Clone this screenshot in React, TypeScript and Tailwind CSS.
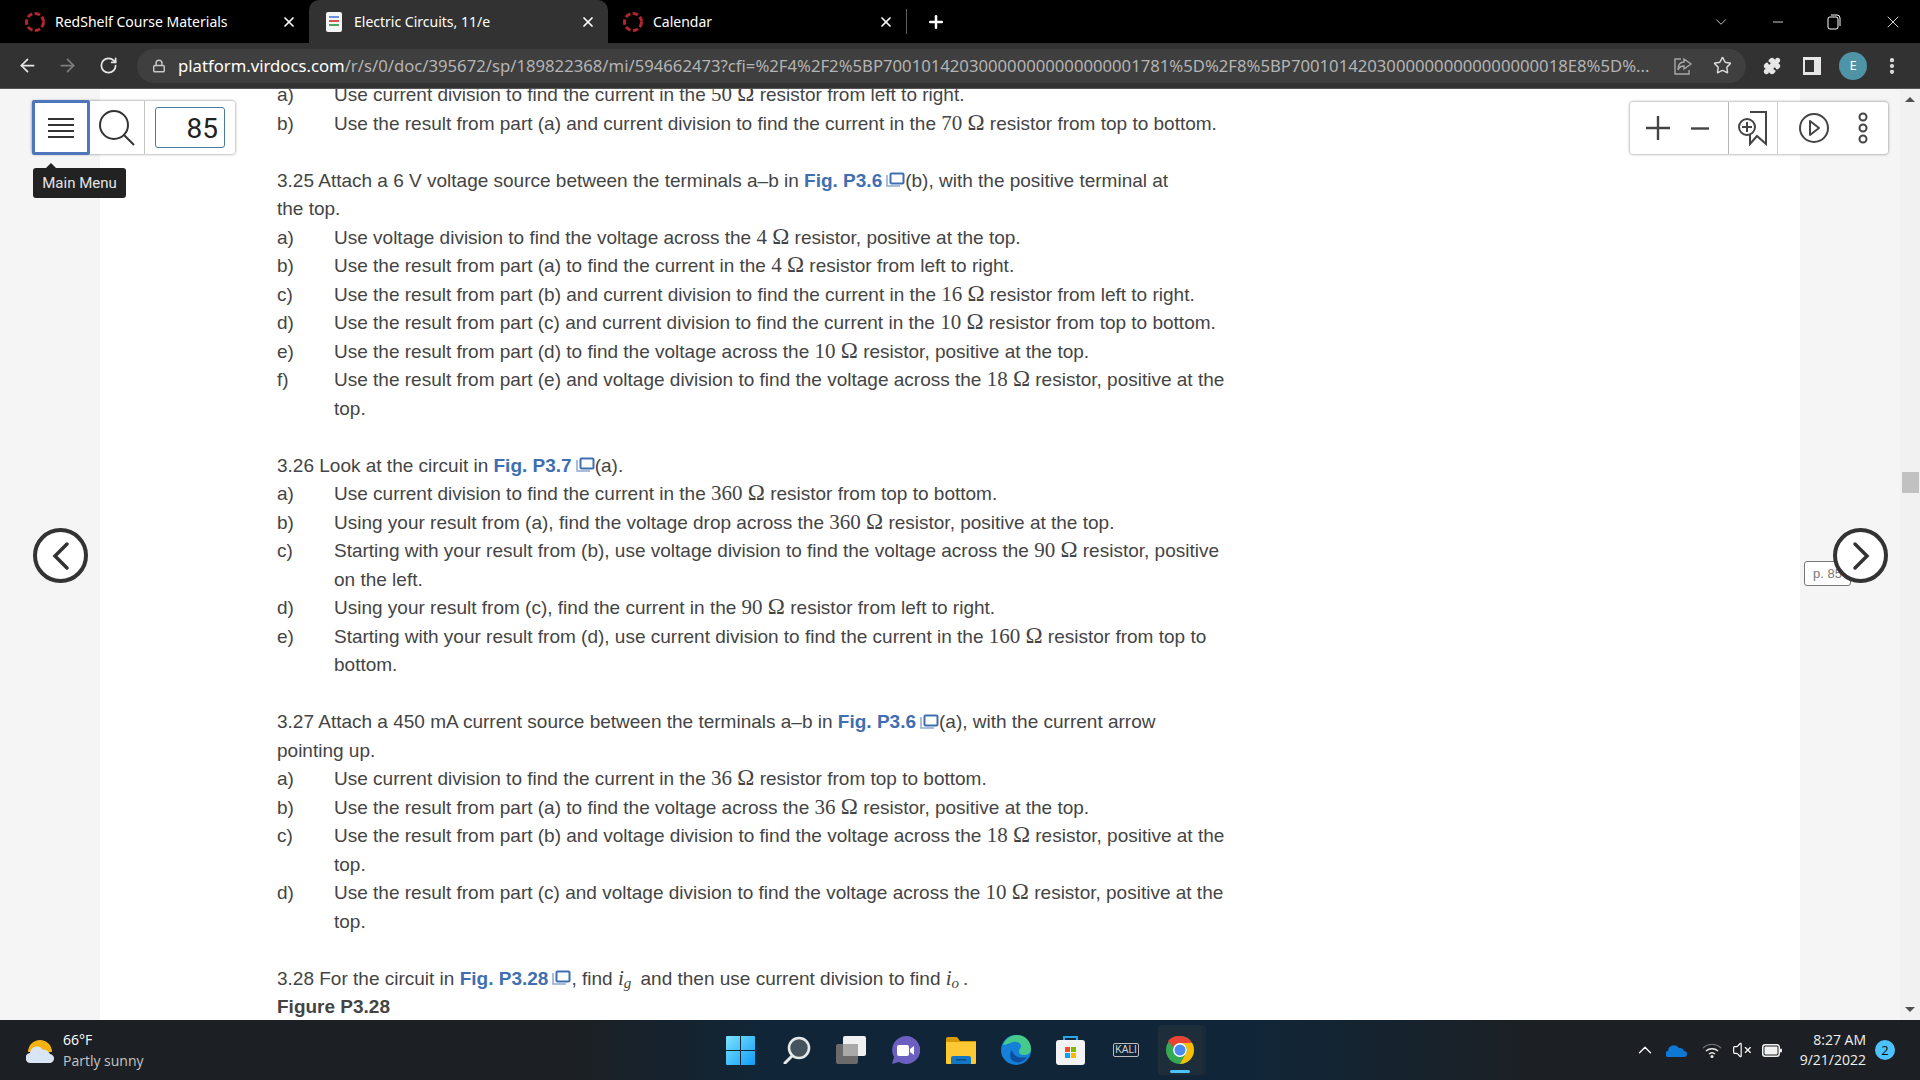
import React from "react";
import { ArrowLeft, ArrowRight, RotateCw, Lock, Star, Puzzle, MoreVertical, X, Plus, ChevronDown, Minus, ChevronUp, VolumeX } from "lucide-react";

const SANS = "font-['Liberation_Sans',Arial,sans-serif]";

// math runs use a serif face, a bit bigger than the body text
const Ohm: React.FC<{ v: string }> = ({ v }) => (
  <span className="font-['Liberation_Serif',serif] text-[21px] leading-none">{v} <span className="text-[23px] leading-none">Ω</span></span>
);

const Fig: React.FC<{ label: string }> = ({ label }) => (
  <span className="inline-flex items-center leading-none text-[#3f6fb0] font-bold">
    {label}
    <svg width="19" height="16" viewBox="0 0 19 16" className="ml-[4px]" fill="none">
      <rect x="4.500" y="1.500" width="13" height="10" rx="1" stroke="#3f6fb0" strokeWidth="2" />
      <path d="M1 3v11h13" stroke="#8fa9d0" strokeWidth="1.500" />
    </svg>
  </span>
);

const Item: React.FC<{ k: string; children: React.ReactNode }> = ({ k, children }) => (
  <div className="flex">
    <span className="w-[57px] shrink-0">{k}</span>
    <span className="w-[895px]">{children}</span>
  </div>
);

const RedShelfIcon: React.FC = () => (
  <svg width="22" height="22" viewBox="0 0 22 22" fill="none">
    <circle cx="11" cy="11" r="8.500" stroke="#b3262e" strokeWidth="3" strokeDasharray="5.500 2.400" />
  </svg>
);

const Tab: React.FC<{ title: string; icon: React.ReactNode; active?: boolean; w: string; pl: string }> = ({ title, icon, active, w, pl }) => (
  <div className={`${w} ${pl} h-[43px] flex items-center pr-[12px] rounded-t-[10px] ${active ? "bg-[#323232]" : ""}`}>
    <span className="w-[22px] flex justify-center shrink-0">{icon}</span>
    <span className="ml-[9px] text-[14px] text-white flex-1 truncate">{title}</span>
    <X size={16} strokeWidth={2.600} className="text-white" />
  </div>
);

const DocIcon: React.FC = () => (
  <svg width="18" height="22" viewBox="0 0 18 22">
    <rect x="1" y="1" width="16" height="20" rx="2" fill="#f4f4f4" />
    <rect x="4" y="5" width="10" height="2" fill="#6b8fd8" />
    <rect x="4" y="9" width="10" height="2" fill="#d0534c" />
    <rect x="4" y="13" width="10" height="2" fill="#4aa564" />
  </svg>
);

const ChromeBar: React.FC = () => (
  <div className="shrink-0">
    <div className="h-[43px] bg-black flex items-center">
      <Tab w="w-[309px]" pl="pl-[24px]" title="RedShelf Course Materials" icon={<RedShelfIcon />} />
      <Tab w="w-[299px]" pl="pl-[14px]" title="Electric Circuits, 11/e" icon={<DocIcon />} active />
      <Tab w="w-[298px]" pl="pl-[14px]" title="Calendar" icon={<RedShelfIcon />} />
      <div className="w-px h-[25px] bg-[#5f5f5f]" />
      <Plus size={20} strokeWidth={3} className="text-white ml-[19px]" />
      <div className="ml-auto flex items-center text-white">
        <ChevronDown size={18} strokeWidth={1} className="mr-[40px]" />
        <Minus size={16} strokeWidth={1.200} className="mr-[41px]" />
        <svg width="14" height="16" viewBox="0 0 14 16" fill="none" stroke="#fff" className="mr-[42px]">
          <rect x="1" y="3" width="10" height="12" rx="2" />
          <path d="M4 1h6a3 3 0 0 1 3 3v8" />
        </svg>
        <X size={20} strokeWidth={1} className="mr-[17px]" />
      </div>
    </div>
    <div className="h-[46px] bg-[#323232] border-b border-[#555] flex items-center">
      <ArrowLeft size={21} strokeWidth={2} className="text-[#e6e6e6] ml-[17px] shrink-0" />
      <ArrowRight size={21} strokeWidth={2} className="text-[#7d7d7d] ml-[19px] shrink-0" />
      <RotateCw size={19} strokeWidth={2.200} className="text-[#e6e6e6] ml-[21px] shrink-0" />
      <div className="ml-[19px] w-[1609px] h-[34px] shrink-0 rounded-full bg-[#3f3f3f] flex items-center pl-[15px] relative">
        <Lock size={14} strokeWidth={2.500} className="text-[#c8c8c8] shrink-0" />
        <span className="ml-[12px] text-[16.700px] whitespace-nowrap text-[#b4b4b4]">
          <span className="text-white">platform.virdocs.com</span>
          /r/s/0/doc/395672/sp/189822368/mi/594662473?cfi=%2F4%2F2%5BP700101420300000000000000001781%5D%2F8%5BP70010142030000000000000000018E8%5D%...
        </span>
        <svg width="20" height="20" viewBox="0 0 20 20" fill="none" stroke="#a8a8a8" strokeWidth="1.400" className="absolute left-[1536px]">
          <path d="M8 3H2v15h14v-4" />
          <path d="M11 3l7 5-7 5v-3c-3 0-5 1-6 4 0-5 2-8 6-8z" />
        </svg>
        <Star size={19} strokeWidth={1.800} className="text-[#dcdcdc] absolute left-[1576px]" />
      </div>
      <Puzzle size={18} fill="#e6e6e6" className="text-[#e6e6e6] ml-[17px] shrink-0" />
      <svg width="18" height="18" viewBox="0 0 18 18" className="ml-[22px] shrink-0">
        <rect x="0" y="0" width="18" height="18" fill="#e6e6e6" />
        <rect x="2" y="3" width="9" height="12" fill="#323232" />
      </svg>
      <div className="ml-[18px] w-[28px] h-[28px] shrink-0 rounded-full bg-[#4f93a6] text-white text-[13px] flex items-center justify-center">E</div>
      <MoreVertical size={20} strokeWidth={3} className="text-[#e6e6e6] ml-[15px] shrink-0" />
    </div>
  </div>
);

const Reader: React.FC = () => (
  <div className={`${SANS} w-[1700px] bg-white text-[#444] text-[19px] leading-[28.500px] pl-[177px] overflow-hidden`}>
    <div className="mt-[-8px]">
      <Item k="a)">Use current division to find the current in the <Ohm v="50" /> resistor from left to right.</Item>
      <Item k="b)">Use the result from part (a) and current division to find the current in the <Ohm v="70" /> resistor from top to bottom.</Item>
    </div>
    <div className="mt-[28.500px] w-[900px]">3.25 Attach a 6 V voltage source between the terminals a–b in <Fig label="Fig. P3.6" />(b), with the positive terminal at the top.</div>
    <Item k="a)">Use voltage division to find the voltage across the <Ohm v="4" /> resistor, positive at the top.</Item>
    <Item k="b)">Use the result from part (a) to find the current in the <Ohm v="4" /> resistor from left to right.</Item>
    <Item k="c)">Use the result from part (b) and current division to find the current in the <Ohm v="16" /> resistor from left to right.</Item>
    <Item k="d)">Use the result from part (c) and current division to find the current in the <Ohm v="10" /> resistor from top to bottom.</Item>
    <Item k="e)">Use the result from part (d) to find the voltage across the <Ohm v="10" /> resistor, positive at the top.</Item>
    <Item k="f)">Use the result from part (e) and voltage division to find the voltage across the <Ohm v="18" /> resistor, positive at the top.</Item>
    <div className="mt-[28.500px]">3.26 Look at the circuit in <Fig label="Fig. P3.7" />(a).</div>
    <Item k="a)">Use current division to find the current in the <Ohm v="360" /> resistor from top to bottom.</Item>
    <Item k="b)">Using your result from (a), find the voltage drop across the <Ohm v="360" /> resistor, positive at the top.</Item>
    <Item k="c)">Starting with your result from (b), use voltage division to find the voltage across the <Ohm v="90" /> resistor, positive on the left.</Item>
    <Item k="d)">Using your result from (c), find the current in the <Ohm v="90" /> resistor from left to right.</Item>
    <Item k="e)">Starting with your result from (d), use current division to find the current in the <Ohm v="160" /> resistor from top to bottom.</Item>
    <div className="mt-[28.500px] w-[900px]">3.27 Attach a 450 mA current source between the terminals a–b in <Fig label="Fig. P3.6" />(a), with the current arrow pointing up.</div>
    <Item k="a)">Use current division to find the current in the <Ohm v="36" /> resistor from top to bottom.</Item>
    <Item k="b)">Use the result from part (a) to find the voltage across the <Ohm v="36" /> resistor, positive at the top.</Item>
    <Item k="c)">Use the result from part (b) and voltage division to find the voltage across the <Ohm v="18" /> resistor, positive at the top.</Item>
    <Item k="d)">Use the result from part (c) and voltage division to find the voltage across the <Ohm v="10" /> resistor, positive at the top.</Item>
    <div className="mt-[28.500px]">
      3.28 For the circuit in <Fig label="Fig. P3.28" />, find{" "}
      <span className="font-['Liberation_Serif',serif] italic text-[21px] leading-none pr-[4px]">i<sub className="text-[15px] leading-none">g</sub></span> and then use current division to find{" "}
      <span className="font-['Liberation_Serif',serif] italic text-[21px] leading-none pr-[4px]">i<sub className="text-[15px] leading-none">o</sub></span>.
    </div>
    <div className="font-bold">Figure P3.28</div>
  </div>
);

const ToolButtons: React.FC = () => (
  <>
    {/* left floating tools */}
    <div className="absolute left-[32px] top-[12px] w-[203px] h-[53px] bg-white rounded-[3px] shadow-[0_0_3px_rgba(0,0,0,0.5)] flex items-center">
      <div className="w-[58px] h-[55px] border-[3px] border-[#4f75bb] rounded-[2px] flex items-center justify-center shrink-0">
        <svg width="28" height="24" viewBox="0 0 28 24" stroke="#333" strokeWidth="2"><path d="M1 3h26M1 9h26M1 15h26M1 21h26" /></svg>
      </div>
      <svg width="38" height="38" viewBox="0 0 38 38" fill="none" stroke="#333" strokeWidth="2" className="ml-[8px] shrink-0">
        <circle cx="16" cy="16" r="14" /><path d="M26 26l10 10" />
      </svg>
      <div className="w-px h-full bg-[#c4c4c4] ml-[8px]" />
      <div className="ml-[10px] w-[70px] h-[41px] border border-[#4a7a9e] rounded-[3px] text-right pr-[6px] text-[28px] leading-[41px] text-[#222] font-['Roboto',sans-serif]">85</div>
    </div>
    {/* tooltip */}
    <div className="absolute left-[33px] top-[79px] w-[93px] h-[30px] bg-[#222] rounded-[3px] text-[#e4e4e4] text-[15px] leading-[30px] text-center font-['Roboto',sans-serif]">
      Main Menu
      <div className="absolute left-[13px] top-[-5px] w-0 h-0 border-x-[5px] border-x-transparent border-b-[5px] border-b-[#222]" />
    </div>
    {/* right floating tools */}
    <div className="absolute left-[1630px] top-[13px] w-[258px] h-[52px] bg-white rounded-[3px] shadow-[0_0_3px_rgba(0,0,0,0.5)] flex items-center">
      <svg width="24" height="24" viewBox="0 0 24 24" stroke="#444" strokeWidth="2.400" className="ml-[16px]"><path d="M0 12h24M12 0v24" /></svg>
      <svg width="18" height="3" viewBox="0 0 18 3" stroke="#444" strokeWidth="2.400" className="ml-[21px]"><path d="M0 1.500h18" /></svg>
      <div className="w-px h-full bg-[#b5b5b5] ml-[19px]" />
      <svg width="30" height="36" viewBox="0 0 30 36" fill="none" stroke="#444" strokeWidth="2" className="ml-[9px]">
        <path d="M12 2h16v32l-9-8-7 8V24" />
        <circle cx="9" cy="17" r="8" />
        <path d="M9 12v10M4 17h10" />
      </svg>
      <div className="w-px h-full bg-[#d0d0d0] ml-[9px]" />
      <svg width="30" height="30" viewBox="0 0 30 30" fill="none" stroke="#444" strokeWidth="2" className="ml-[21px]">
        <circle cx="15" cy="15" r="14" /><path d="M11 8l9 7-9 7z" strokeLinejoin="round" />
      </svg>
      <svg width="10" height="36" viewBox="0 0 10 36" fill="none" stroke="#444" strokeWidth="2" className="ml-[29px]">
        <circle cx="5" cy="7" r="3.500" /><circle cx="5" cy="18" r="3.500" /><circle cx="5" cy="29" r="3.500" />
      </svg>
    </div>
    {/* previous / next */}
    <div className="absolute left-[33px] top-[439px] w-[55px] h-[55px] bg-white rounded-full border-[4px] border-[#333] flex items-center justify-center">
      <svg width="20" height="30" viewBox="0 0 20 30" fill="none" stroke="#333" strokeWidth="3.500" strokeLinecap="round"><path d="M16 3L4 15l12 12" /></svg>
    </div>
    <div className={`${SANS} absolute left-[1804px] top-[472px] w-[47px] h-[25px] bg-white border border-[#777] rounded-[3px] text-[13px] leading-[23px] pl-[8px] text-[#777]`}>p. 85</div>
    <div className="absolute left-[1833px] top-[439px] w-[55px] h-[55px] bg-white rounded-full border-[4px] border-[#333] flex items-center justify-center">
      <svg width="20" height="30" viewBox="0 0 20 30" fill="none" stroke="#333" strokeWidth="3.500" strokeLinecap="round"><path d="M4 3l12 12L4 27" /></svg>
    </div>
  </>
);

const Scrollbar: React.FC = () => (
  <div className="w-[20px] shrink-0 bg-[#f1f1f1] relative">
    <div className="absolute left-[5px] top-[8px] w-0 h-0 border-x-[5px] border-x-transparent border-b-[5px] border-b-[#505050]" />
    <div className="absolute left-[2px] top-[383px] w-[17px] h-[21px] bg-[#c1c1c1]" />
    <div className="absolute left-[5px] bottom-[8px] w-0 h-0 border-x-[5px] border-x-transparent border-t-[5px] border-t-[#505050]" />
  </div>
);

const TaskIcons: React.FC = () => (
  <div className="absolute left-[726px] top-0 h-[60px] flex items-center">
    {/* start */}
    <svg width="29" height="29" viewBox="0 0 29 29">
      <defs><linearGradient id="st" x1="0" y1="0" x2="1" y2="1"><stop offset="0" stopColor="#7be3ff" /><stop offset="1" stopColor="#109cf5" /></linearGradient></defs>
      <path d="M0 1a1 1 0 0 1 1-1h13v14H0zM15 0h13a1 1 0 0 1 1 1v13H15zM0 15h14v14H1a1 1 0 0 1-1-1zM15 15h14v13a1 1 0 0 1-1 1H15z" fill="url(#st)" />
    </svg>
    {/* search */}
    <svg width="28" height="28" viewBox="0 0 28 28" fill="none" className="ml-[28px]">
      <circle cx="16" cy="12" r="10" fill="#43545f" stroke="#e8e8e8" strokeWidth="2.600" />
      <path d="M9 20l-7 7" stroke="#e8e8e8" strokeWidth="3" strokeLinecap="round" />
    </svg>
    {/* task view */}
    <svg width="30" height="28" viewBox="0 0 30 28" className="ml-[25px]">
      <rect x="0" y="8" width="22" height="20" rx="2" fill="#6a6a6a" />
      <rect x="7" y="0" width="23" height="20" rx="2" fill="#f0f0f0" />
      <rect x="7" y="8" width="15" height="12" fill="#a9a9a9" />
    </svg>
    {/* teams chat */}
    <svg width="29" height="29" viewBox="0 0 29 29" className="ml-[25px]">
      <path d="M15 0a14 14 0 1 1-7 26L1 28l2-7A14 14 0 0 1 15 0z" fill="#6b5fc0" />
      <rect x="6" y="9" width="12" height="11" rx="2" fill="#fff" />
      <path d="M19 13l4-3v9l-4-3z" fill="#fff" />
    </svg>
    {/* explorer */}
    <svg width="30" height="27" viewBox="0 0 30 27" className="ml-[26px]">
      <path d="M0 2a2 2 0 0 1 2-2h9l3 4h16v5H0z" fill="#d79a07" />
      <path d="M0 5h30v21a1 1 0 0 1-1 1H1a1 1 0 0 1-1-1z" fill="#fcc934" />
      <path d="M5 27v-6a2 2 0 0 1 2-2h16a2 2 0 0 1 2 2v6z" fill="#1277c4" />
      <rect x="10" y="22" width="10" height="1.500" fill="#0b4d85" />
    </svg>
    {/* edge */}
    <svg width="30" height="30" viewBox="0 0 30 30" className="ml-[25px]">
      <circle cx="15" cy="15" r="15" fill="#1580d8" />
      <path d="M2 10C5 2 12 0 16 0c8 0 14 6 14 14 0 4-3 6-7 6-3 0-5-1-5-3 0-4 2-3 2-6 0-3-4-5-8-4-4 1-8 3-10 3z" fill="#46c98a" />
      <path d="M12 26c-3-2-4-7-1-11 1 6 7 9 15 7-3 5-9 7-14 4z" fill="#0d4f9e" />
    </svg>
    {/* store */}
    <svg width="29" height="29" viewBox="0 0 29 29" className="ml-[25px]">
      <path d="M8 5V1h13v4" fill="none" stroke="#2aa6e8" strokeWidth="2" />
      <rect x="0" y="4" width="29" height="25" rx="3" fill="#f3f3f3" />
      <rect x="9" y="11" width="5" height="5" fill="#f25022" /><rect x="15" y="11" width="5" height="5" fill="#7fba00" />
      <rect x="9" y="17" width="5" height="5" fill="#00a4ef" /><rect x="15" y="17" width="5" height="5" fill="#ffb900" />
    </svg>
    {/* kali terminal button */}
    <div className="ml-[28px] w-[26px] h-[14px] border border-[#bcbcbc] rounded-[2px] text-[#d0d0d0] text-[10px] leading-[12px] text-center font-['Liberation_Sans',sans-serif]">KALI</div>
    {/* running chrome */}
    <div className="ml-[19px] w-[44px] h-[50px] rounded-[4px] bg-[#1e2d3a] shadow-[4px_0_0_#1a2a37] relative flex items-center justify-center">
      <svg width="28" height="28" viewBox="0 0 28 28">
        <circle cx="14" cy="14" r="14" fill="#34a853" />
        <path d="M14 0a14 14 0 0 1 12.100 7H14a7 7 0 0 0-6.500 4.400L2 5A14 14 0 0 1 14 0z" fill="#ea4335" />
        <path d="M26.100 7A14 14 0 0 1 14 28l6-10.500A7 7 0 0 0 14 7z" fill="#fbbc04" />
        <circle cx="14" cy="14" r="6.200" fill="#4a8af4" stroke="#fff" strokeWidth="1.400" />
      </svg>
      <div className="absolute left-[12px] bottom-[2px] w-[20px] h-[3px] rounded-full bg-[#4cc2ff]" />
    </div>
  </div>
);

const Tray: React.FC = () => (
  <div className="ml-auto flex items-center text-white pr-[25px]">
    <ChevronUp size={22} strokeWidth={1.400} />
    <svg width="21" height="13" viewBox="0 0 21 13" className="ml-[10px]">
      <path d="M3 13a3 3 0 0 1-1-6 6 6 0 0 1 11-3 4.500 4.500 0 0 1 5 3 3 3 0 0 1 0 6z" fill="#0f78d4" />
    </svg>
    <svg width="20" height="16" viewBox="0 0 20 16" fill="none" className="ml-[15px]">
      <path d="M1 6a13 13 0 0 1 18 0" stroke="#6e6e6e" strokeWidth="1.400" />
      <path d="M4 9a9 9 0 0 1 12 0M7 12a4.500 4.500 0 0 1 6 0" stroke="#eee" strokeWidth="1.400" />
      <circle cx="10" cy="14.500" r="1.500" fill="#eee" />
    </svg>
    <VolumeX size={20} strokeWidth={1.400} className="ml-[10px]" />
    <svg width="20" height="13" viewBox="0 0 20 13" className="ml-[10px]">
      <rect x="0.750" y="0.750" width="16.500" height="11.500" rx="2.500" fill="none" stroke="#f2f2f2" strokeWidth="1.500" />
      <rect x="2.500" y="2.500" width="13" height="8" rx="1" fill="#f2f2f2" />
      <rect x="18" y="4.500" width="2" height="4" rx="1" fill="#f2f2f2" />
    </svg>
    <div className="ml-[18px] text-[14px] leading-[20px] text-right text-[#f0f0f0] font-['Open_Sans',sans-serif]">
      <div>8:27 AM</div>
      <div>9/21/2022</div>
    </div>
    <div className="ml-[9px] w-[20px] h-[20px] rounded-full bg-[#4cc2ff] text-[#111] text-[13px] leading-[20px] text-center">2</div>
  </div>
);

const Taskbar: React.FC = () => (
  <div className="h-[60px] shrink-0 relative flex items-center bg-[linear-gradient(90deg,#1c2024_0%,#1c2024_30%,#102638_40%,#102638_65%,#1c2024_80%,#1c2024_100%)] font-['Open_Sans',sans-serif]">
    <svg width="28" height="25" viewBox="0 0 28 25" className="ml-[26px] shrink-0">
      <path d="M2 14a12 12 0 0 1 24 0z" fill="#f6b20f" />
      <path d="M5 25a5 5 0 0 1-1-10 7 7 0 0 1 13-3 6 6 0 0 1 7 4 4.500 4.500 0 0 1-1 9z" fill="#d9e4f4" />
    </svg>
    <div className="ml-[9px] text-[14px] leading-[21px]">
      <div className="text-white">66°F</div>
      <div className="text-[#c4c4c4]">Partly sunny</div>
    </div>
    <TaskIcons />
    <Tray />
  </div>
);

export default function App() {
  return (
    <div className="w-[1920px] h-[1080px] flex flex-col overflow-hidden font-['Noto_Sans',sans-serif]">
      <ChromeBar />
      <div className="flex-1 min-h-0 flex relative">
        <div className="w-[100px] shrink-0 bg-[#f5f5f5]" />
        <Reader />
        <div className="w-[100px] shrink-0 bg-[#f5f5f5]" />
        <Scrollbar />
        <ToolButtons />
      </div>
      <Taskbar />
    </div>
  );
}
